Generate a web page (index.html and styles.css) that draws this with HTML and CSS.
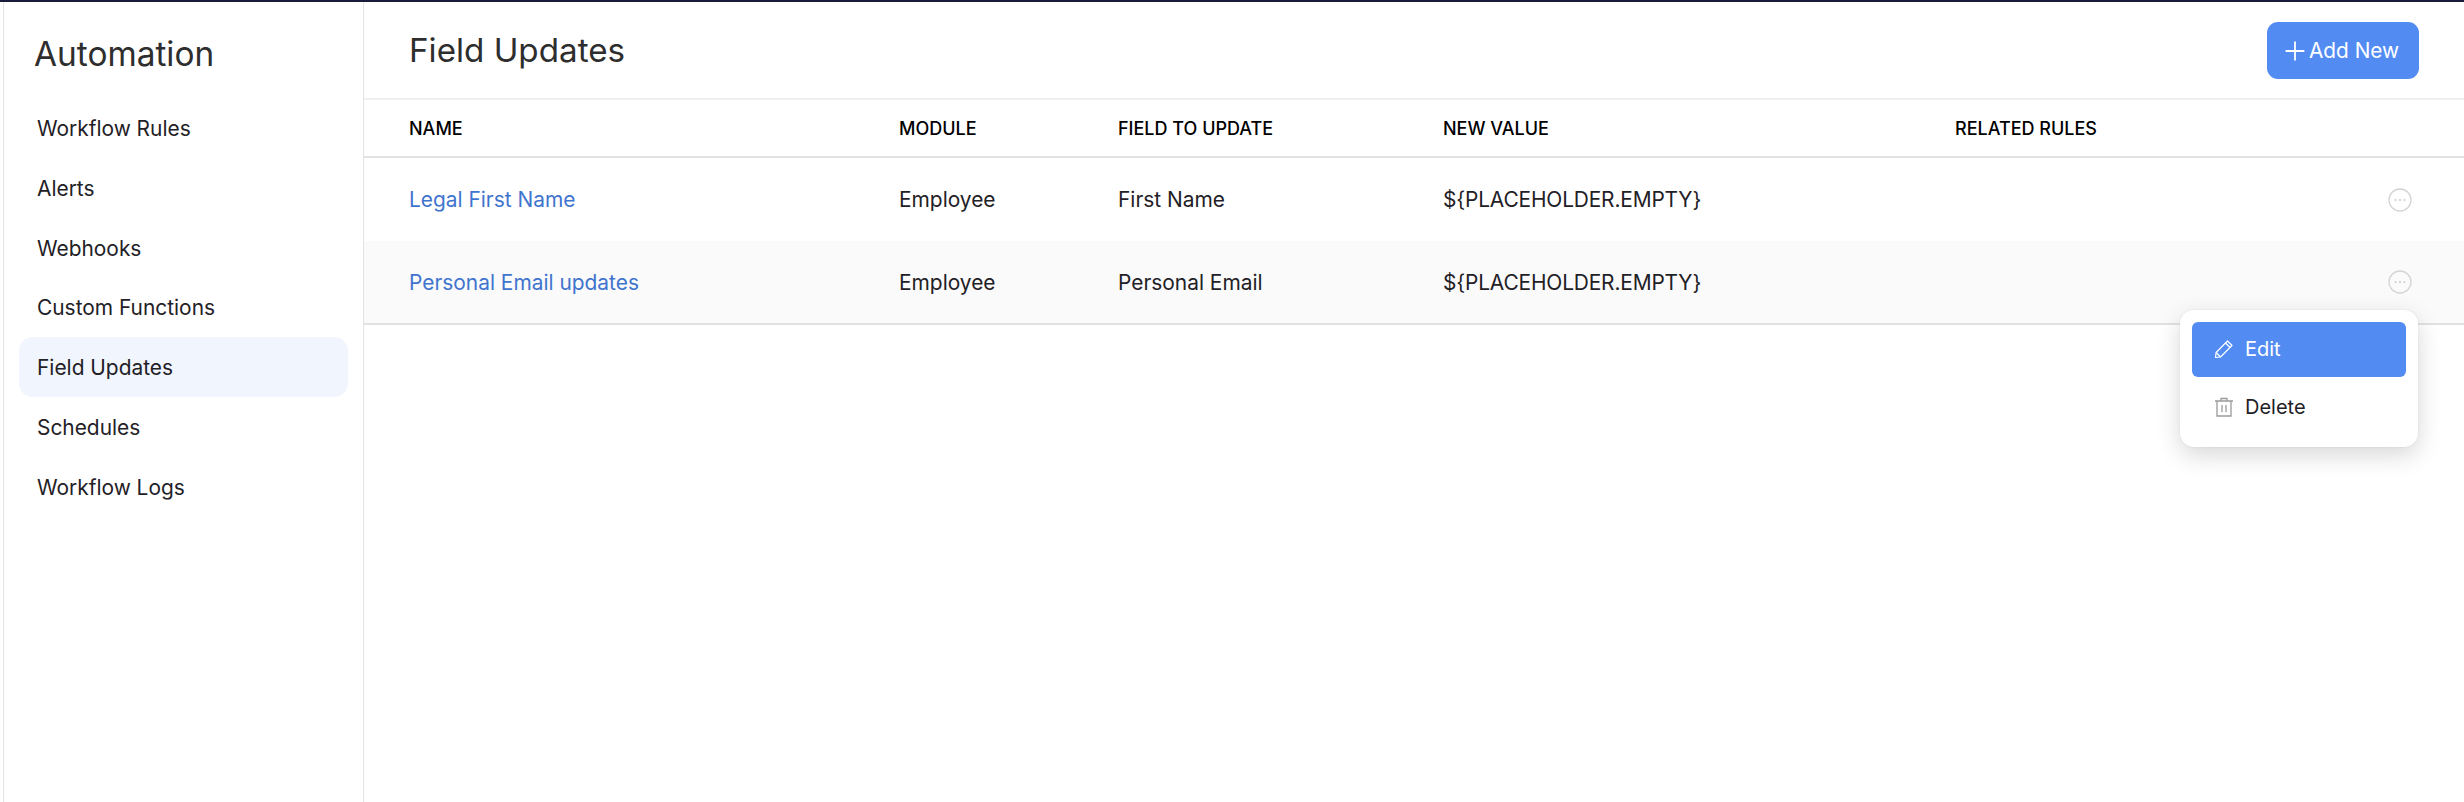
FILE: index.html
```html
<!DOCTYPE html>
<html lang="en">
<head>
<meta charset="utf-8">
<title>Field Updates</title>
<link rel="stylesheet" href="styles.css">
</head>
<body>
<div class="topbar"></div>
<div class="app">
  <aside class="sidebar">
    <h2 class="side-title">Automation</h2>
    <nav class="nav">
      <a class="nav-item">Workflow Rules</a>
      <a class="nav-item">Alerts</a>
      <a class="nav-item">Webhooks</a>
      <a class="nav-item">Custom Functions</a>
      <a class="nav-item active">Field Updates</a>
      <a class="nav-item">Schedules</a>
      <a class="nav-item">Workflow Logs</a>
    </nav>
  </aside>
  <main class="main">
    <header class="header">
      <h1 class="title">Field Updates</h1>
      <button class="add-btn">
        <svg class="plus" width="20" height="20" viewBox="0 0 20 20"><path d="M10 .6v18.8M.6 10h18.8" stroke="#fff" stroke-width="1.8" fill="none"/></svg>
        <span>Add New</span>
      </button>
    </header>
    <div class="row head">
      <div>NAME</div><div>MODULE</div><div>FIELD TO UPDATE</div><div>NEW VALUE</div><div>RELATED RULES</div><div></div>
    </div>
    <div class="row body">
      <div class="link">Legal First Name</div><div>Employee</div><div>First Name</div><div class="value">${PLACEHOLDER.EMPTY}</div><div></div>
      <div class="more"><svg width="24" height="24" viewBox="0 0 24 24"><circle cx="12" cy="12" r="11" fill="none" stroke="#d4d4d4" stroke-width="1.3"/><circle cx="7.5" cy="12" r="1.1" fill="#cfcfcf"/><circle cx="12" cy="12" r="1.1" fill="#cfcfcf"/><circle cx="16.5" cy="12" r="1.1" fill="#cfcfcf"/></svg></div>
    </div>
    <div class="row body alt">
      <div class="link">Personal Email updates</div><div>Employee</div><div>Personal Email</div><div class="value">${PLACEHOLDER.EMPTY}</div><div></div>
      <div class="more"><svg width="24" height="24" viewBox="0 0 24 24"><circle cx="12" cy="12" r="11" fill="none" stroke="#d4d4d4" stroke-width="1.3"/><circle cx="7.5" cy="12" r="1.1" fill="#cfcfcf"/><circle cx="12" cy="12" r="1.1" fill="#cfcfcf"/><circle cx="16.5" cy="12" r="1.1" fill="#cfcfcf"/></svg></div>
    </div>
    <div class="menu">
      <div class="menu-item selected">
        <svg width="20" height="20" viewBox="0 0 20 20" fill="none" stroke="#fff" stroke-width="1.2" stroke-linejoin="round"><path d="M1.5 18.5l.6-5L13.5 2l4.5 4.5L6.5 18z"/><path d="M11.5 4l4.5 4.5M2.1 13.5l4.4 4.5"/></svg>
        <span>Edit</span>
      </div>
      <div class="menu-item">
        <svg width="20" height="20" viewBox="0 0 20 20" fill="none" stroke="#9b9b9b" stroke-width="1.3"><path d="M1 4h18M3 4v15h14V4M7 4V1.5h6V4M8 8v7M12 8v7"/></svg>
        <span>Delete</span>
      </div>
    </div>
  </main>
</div>
</body>
</html>
```

FILE: styles.css
```css
* { box-sizing: border-box; }
html, body { margin: 0; padding: 0; height: 100%; background: #fff; overflow: hidden; }
body { font-family: "Inter", "Liberation Sans", sans-serif; color: #1f2126; font-size: 20.9px; }
.topbar { height: 2px; background: #1a1d3a; }
.app { display: flex; height: 800px; padding-left: 3px; }
.sidebar { width: 361px; flex: none; border-left: 1px solid #e3e3e3; border-right: 1px solid #e3e3e3; padding: 0 15px; }
.side-title { margin: 30px 0 0 15px; font-size: 33.4px; line-height: 44px; font-weight: 400; color: #2e2e2e; }
.nav { display: flex; flex-direction: column; margin-top: 22px; }
.nav-item { height: 59.8px; line-height: 62.6px; padding-left: 18px; border-radius: 14px; }
.nav-item.active { background: #f1f5fe; }
.main { flex: 1; position: relative; min-width: 0; }
.header { height: 98px; display: flex; align-items: center; justify-content: space-between; padding: 0 45px 0 45px; border-bottom: 2px solid #efefef; }
.title { margin: 0; font-size: 33.2px; line-height: 44px; font-weight: 400; color: #2e2e2e; }
.add-btn { display: flex; align-items: center; gap: 4px; width: 152px; height: 57px; margin-top: 1px; padding: 0 0 0 18px; border: 0; border-radius: 11px; background: #528cf3; color: #fff; font: 400 20.8px "Inter", sans-serif; }
.row { display: grid; grid-template-columns: 490px 219px 325px 512px 1fr 76px; padding-left: 45px; align-items: center; }
.head { height: 58px; border-bottom: 2px solid #e2e2e2; font-size: 18px; font-weight: 500; color: #000; }
.body { height: 83px; }
.alt { background: #fafafa; border-bottom: 2px solid #e2e2e2; height: 84px; }
.link { color: #3f74ce; }
.value { letter-spacing: -.15px; }
.more { display: flex; line-height: 0; width: 24px; }
.menu { position: absolute; left: 1816px; top: 308px; width: 238px; height: 137px; padding: 12px; background: #fff; border-radius: 14px; font-size: 20px; box-shadow: 0 8px 24px rgba(0,0,0,.16), 0 0 2px rgba(0,0,0,.08); }
.menu-item { display: flex; align-items: center; gap: 11px; height: 55px; padding-left: 22px; border-radius: 6px; }
.menu-item + .menu-item { margin-top: 2px; }
.menu-item.selected { background: #528cf3; color: #fff; padding-bottom: 2px; }
```
